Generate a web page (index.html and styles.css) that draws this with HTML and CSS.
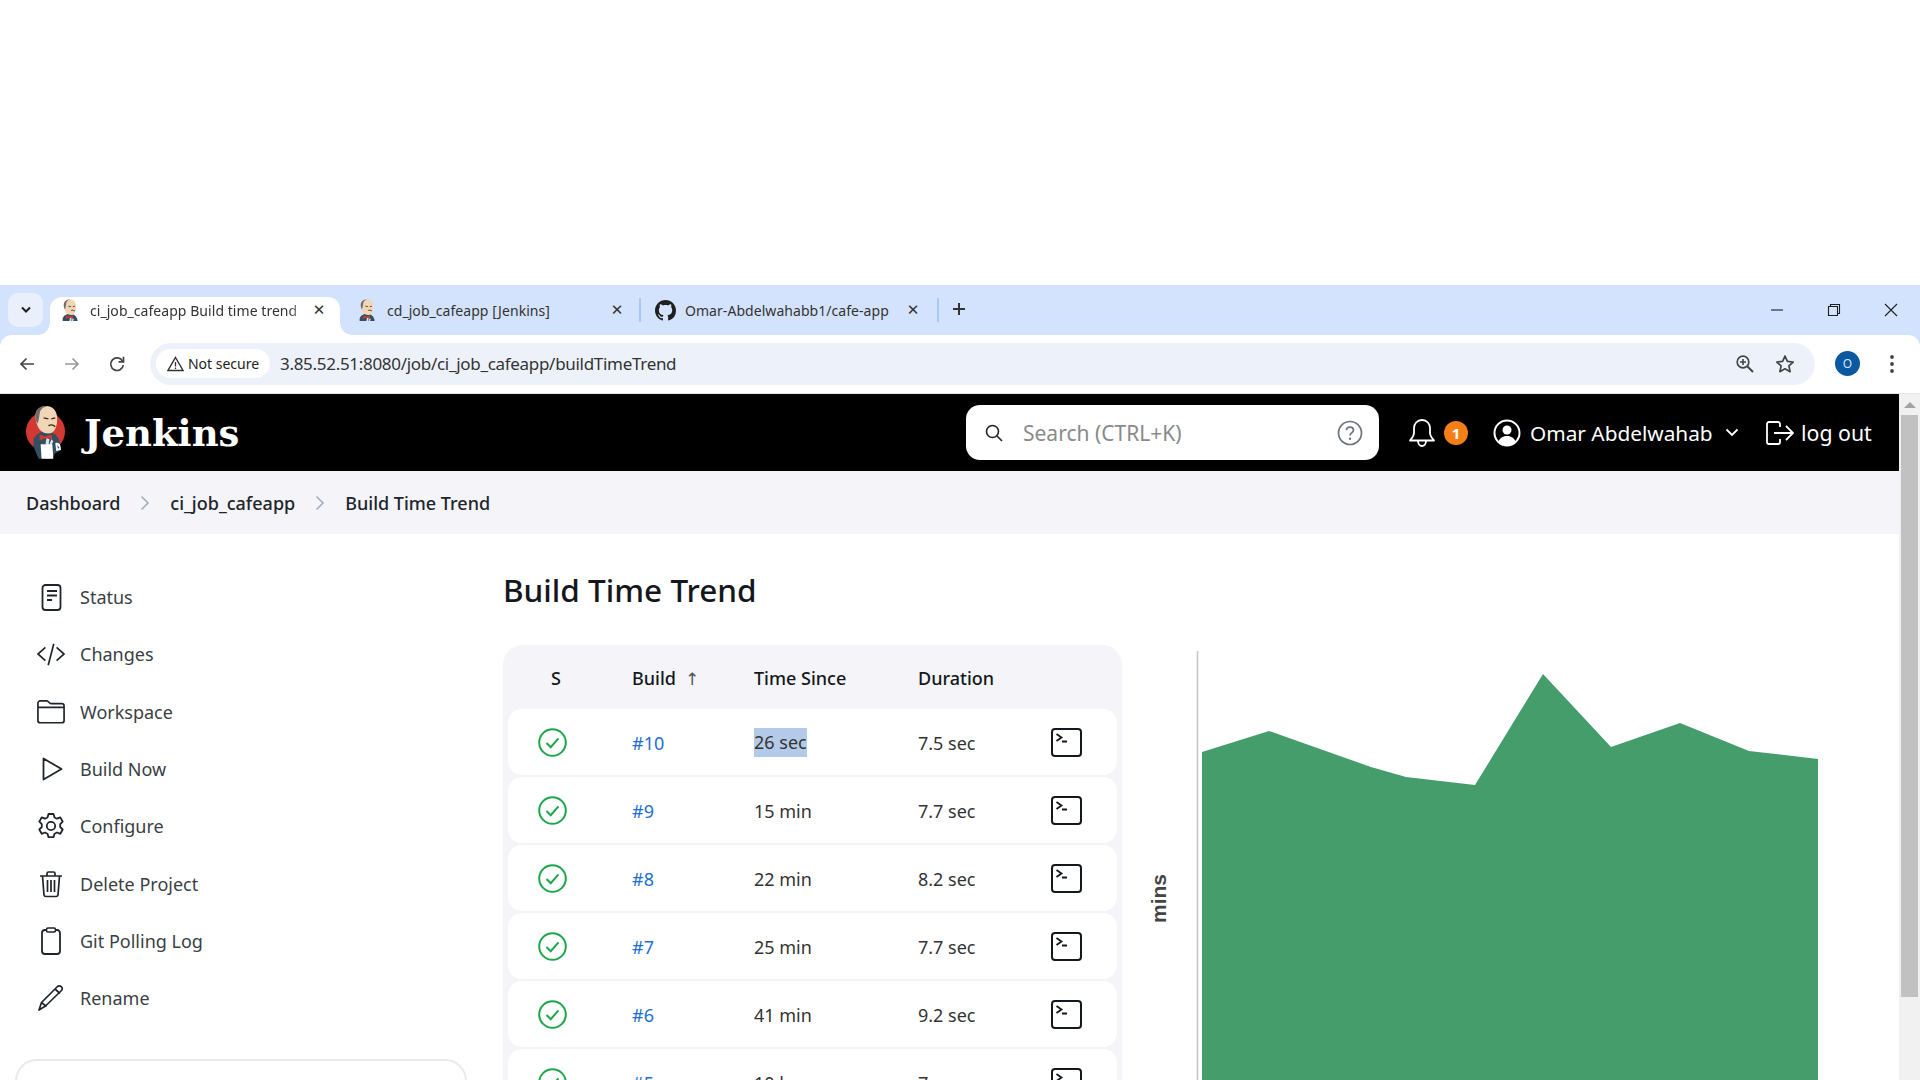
FILE: index.html
```html
<!DOCTYPE html>
<html lang="en">
<head>
<meta charset="utf-8">
<title>ci_job_cafeapp Build time trend</title>
<link rel="stylesheet" href="styles.css">
</head>
<body>
<svg class="defs" width="0" height="0" aria-hidden="true">
  <defs>
    <g id="butler-body">
      <path d="M9 34c3-5 8-7 12-7 7 0 12 3 14 9l2 8c-1 3-4 5-6 5l-3 6H14l-3-7c-2-4-3-9-2-14z" fill="#335061"/>
      <path d="M11 8C12 3 18 0 24 1c6 1 9 6 9 13 0 7-2 12-5 14-4 2-9 1-12-2-3-3-6-10-5-18z" fill="#f0d6b7"/>
      <path d="M11 8c1-5 7-8 12-7-5 1-8 4-8 8l-1 6-1 4c-2-3-3-7-2-11z" fill="#6d6b6d"/>
      <path d="M19 13l5 1M27 14l4-1M24 21c2-1 5-1 7 1" stroke="#3a2a20" stroke-width="1.4" fill="none"/>
      <path d="M15 30l6 2 6-2 1 5-7-1-6 2z" fill="#d33833"/>
      <path d="M22 34l3 1-1 6-3-1zM27 35l2 2-2 4-2-1z" fill="#dfe6ea"/>
    </g>
    <symbol id="butler" viewBox="0 0 42 56">
      <circle cx="21" cy="27" r="20" fill="#d33833"/>
      <use href="#butler-body"/>
      <path d="M16 40h12l1 15H17z" fill="#fff"/>
      <path d="M31 39c2-1 5 0 5 2l1 5-5 1z" fill="#f4f4f4"/>
      <path d="M33 41l2 2-1 2z" fill="#335061"/>
    </symbol>
    <symbol id="butler-fav" viewBox="4 0 36 40">
      <use href="#butler-body"/>
    </symbol>
  </defs>
</svg>
<div class="screen">
  <div class="blank"></div>

  <div class="chrome">
    <div class="tabstrip">
      <div class="tabsearch">
        <svg width="12" height="8" viewBox="0 0 12 8"><path d="M2 1.500l4 4 4-4" fill="none" stroke="#1f1f1f" stroke-width="2"/></svg>
      </div>
      <div class="tab tab-active">
        <svg class="fav"><use href="#butler-fav"/></svg>
        <span class="tab-title tab-title-fade">ci_job_cafeapp Build time trend</span>
        <span class="tab-x">✕</span>
      </div>
      <div class="tab tab-two">
        <svg class="fav"><use href="#butler-fav"/></svg>
        <span class="tab-title">cd_job_cafeapp [Jenkins]</span>
        <span class="tab-x">✕</span>
      </div>
      <i class="tab-sep"></i>
      <div class="tab tab-three">
        <svg class="fav-gh" viewBox="0 0 16 16"><path fill="#1f1f1f" d="M8 0C3.58 0 0 3.58 0 8c0 3.54 2.29 6.53 5.47 7.59.4.07.55-.17.55-.38 0-.19-.01-.82-.01-1.49-2.01.37-2.53-.49-2.69-.94-.09-.23-.48-.94-.82-1.13-.28-.15-.68-.52-.01-.53.63-.01 1.08.58 1.23.82.72 1.21 1.87.87 2.33.66.07-.52.28-.87.51-1.07-1.78-.2-3.64-.89-3.64-3.95 0-.87.31-1.59.82-2.15-.08-.2-.36-1.02.08-2.12 0 0 .67-.21 2.2.82.64-.18 1.32-.27 2-.27.68 0 1.36.09 2 .27 1.53-1.04 2.2-.82 2.2-.82.44 1.1.16 1.92.08 2.12.51.56.82 1.27.82 2.15 0 3.07-1.87 3.75-3.65 3.95.29.25.54.73.54 1.48 0 1.07-.01 1.93-.01 2.2 0 .21.15.46.55.38A8.013 8.013 0 0016 8c0-4.42-3.58-8-8-8z"/></svg>
        <span class="tab-title">Omar-Abdelwahabb1/cafe-app</span>
        <span class="tab-x">✕</span>
      </div>
      <i class="tab-sep"></i>
      <svg class="tab-plus" width="14" height="14" viewBox="0 0 14 14"><path d="M7 1v12M1 7h12" stroke="#333" stroke-width="2"/></svg>
      <div class="winctl">
        <svg width="14" height="14" viewBox="0 0 14 14"><path d="M1 7h12" stroke="#1f1f1f" stroke-width="1.100"/></svg>
        <svg width="14" height="14" viewBox="0 0 14 14"><path d="M1.500 3.500h9v9h-9zM3.500 3.500v-2h9v9h-2" fill="none" stroke="#1f1f1f" stroke-width="1.100"/></svg>
        <svg width="14" height="14" viewBox="0 0 14 14"><path d="M1 1l12 12M13 1L1 13" stroke="#1f1f1f" stroke-width="1.100"/></svg>
      </div>
    </div>

    <div class="toolbar">
      <svg class="nav-ic" viewBox="0 0 18 18"><path d="M16 9H3M8.500 3.500L3 9l5.500 5.500" fill="none" stroke="#444" stroke-width="1.700"/></svg>
      <svg class="nav-ic nav-fwd" viewBox="0 0 18 18"><path d="M2 9h13M9.500 3.500L15 9l-5.500 5.500" fill="none" stroke="#9a9a9a" stroke-width="1.700"/></svg>
      <svg class="nav-ic nav-reload" viewBox="0 0 18 18"><path d="M14.500 6A6.300 6.300 0 1 0 15.300 10" fill="none" stroke="#444" stroke-width="1.700"/><path d="M15.500 1.800V6.800H10.500" fill="none" stroke="#444" stroke-width="1.700"/></svg>
      <div class="omnibox">
        <div class="chip">
          <svg width="17" height="16" viewBox="0 0 17 16"><path d="M8.500 1.500L16 14.500H1z" fill="none" stroke="#333" stroke-width="1.400"/><path d="M8.500 6v4.500M8.500 11.500v1.500" stroke="#333" stroke-width="1.300"/></svg>
          <span>Not secure</span>
        </div>
        <span class="url">3.85.52.51:8080/job/ci_job_cafeapp/buildTimeTrend</span>
        <svg class="omni-zoom" width="20" height="20" viewBox="0 0 20 20"><circle cx="8" cy="8" r="5.800" fill="none" stroke="#444" stroke-width="1.700"/><path d="M12.500 12.500L18 18" stroke="#444" stroke-width="2"/><path d="M8 5v6M5 8h6" stroke="#444" stroke-width="1.600"/></svg>
        <svg class="omni-star" width="20" height="20" viewBox="0 0 20 20"><path d="M10 2l2.400 5.400 5.800.6-4.300 3.900 1.200 5.800L10 14.800 4.900 17.700l1.200-5.800L1.800 8l5.800-.6z" fill="none" stroke="#444" stroke-width="1.700" stroke-linejoin="round"/></svg>
      </div>
      <div class="avatar">O</div>
      <svg class="dots" width="6" height="20" viewBox="0 0 6 20"><circle cx="3" cy="3" r="1.900" fill="#444"/><circle cx="3" cy="10" r="1.900" fill="#444"/><circle cx="3" cy="17" r="1.900" fill="#444"/></svg>
    </div>
  </div>

  <div class="viewport">
    <div class="page">
      <header class="jk-bar">
        <svg class="jk-logo"><use href="#butler"/></svg>
        <span class="jk-name">Jenkins</span>
        <div class="search">
          <svg width="20" height="20" viewBox="0 0 20 20"><circle cx="8.500" cy="8.500" r="6" fill="none" stroke="#222" stroke-width="1.600"/><path d="M13 13l5 5" stroke="#222" stroke-width="1.600"/></svg>
          <span class="search-text">Search (CTRL+K)</span>
          <svg class="search-help" width="26" height="26" viewBox="0 0 26 26"><circle cx="13" cy="13" r="11.500" fill="none" stroke="#6b7280" stroke-width="1.700"/><path d="M9.500 10.300c0-2 1.600-3.200 3.500-3.200s3.500 1.200 3.500 3c0 2.800-3.500 2.700-3.500 5.400" fill="none" stroke="#6b7280" stroke-width="1.700"/><circle cx="13" cy="18.700" r="1.200" fill="#6b7280"/></svg>
        </div>
        <svg class="bell" width="26" height="30" viewBox="0 0 26 30"><path d="M13 2c-5 0-8 4-8 8v5c0 3-2 5-4 7.500h24c-2-2.500-4-4.500-4-7.500v-5c0-4-3-8-8-8zM9 23c0 3 2 5 4 5s4-2 4-5" fill="none" stroke="#fff" stroke-width="1.800" stroke-linejoin="round"/></svg>
        <span class="badge">1</span>
        <svg class="user" width="28" height="28" viewBox="0 0 28 28"><circle cx="14" cy="14" r="12.500" fill="none" stroke="#fff" stroke-width="2"/><circle cx="14" cy="11" r="4.500" fill="#fff"/><path d="M5.500 22.500c1.500-4 5-5.500 8.500-5.500s7 1.500 8.500 5.500c-2 2.500-5 4-8.500 4s-6.500-1.500-8.500-4z" fill="#fff"/></svg>
        <span class="user-name">Omar Abdelwahab</span>
        <svg class="chev" width="14" height="9" viewBox="0 0 14 9"><path d="M1.500 1.500L7 7l5.500-5.500" fill="none" stroke="#fff" stroke-width="1.800"/></svg>
        <svg class="logout" width="28" height="24" viewBox="0 0 28 24"><path d="M14 6V3a2 2 0 0 0-2-2H3a2 2 0 0 0-2 2v18a2 2 0 0 0 2 2h9a2 2 0 0 0 2-2v-3M8 12h19M20 5l7 7-7 7" fill="none" stroke="#fff" stroke-width="1.800"/></svg>
        <span class="logout-text">log out</span>
      </header>

      <nav class="crumbs">
        <span>Dashboard</span>
        <svg width="10" height="16" viewBox="0 0 10 16"><path d="M1.500 1.500L8 8l-6.500 6.500" fill="none" stroke="#9fb0c4" stroke-width="1.600"/></svg>
        <span>ci_job_cafeapp</span>
        <svg width="10" height="16" viewBox="0 0 10 16"><path d="M1.500 1.500L8 8l-6.500 6.500" fill="none" stroke="#9fb0c4" stroke-width="1.600"/></svg>
        <span>Build Time Trend</span>
      </nav>

      <div class="content">
        <aside class="side">
          <div class="side-item">
            <svg viewBox="0 0 28 28"><rect x="5.500" y="2" width="18" height="25" rx="3" fill="none" stroke="#20252b" stroke-width="1.800"/><path d="M10 8h10M10 12.500h10M10 17h5" stroke="#20252b" stroke-width="1.800"/></svg>
            <span>Status</span>
          </div>
          <div class="side-item">
            <svg viewBox="0 0 30 28"><path d="M9 7l-8 7 8 7M21 7l8 7-8 7M18 3l-6 23" fill="none" stroke="#20252b" stroke-width="1.800"/></svg>
            <span>Changes</span>
          </div>
          <div class="side-item">
            <svg viewBox="0 0 30 28"><path d="M1 24V5.500A2.500 2.500 0 0 1 3.500 3h7c2 0 2.500 3 4.500 3h11.500A2.500 2.500 0 0 1 29 8.500V24a2.500 2.500 0 0 1-2.500 2.500h-23A2.500 2.500 0 0 1 1 24zM1 10h28" fill="none" stroke="#20252b" stroke-width="1.800" transform="translate(0 -1)"/></svg>
            <span>Workspace</span>
          </div>
          <div class="side-item">
            <svg viewBox="0 0 28 28"><path d="M6.500 3.500v21l18-10.500z" fill="none" stroke="#20252b" stroke-width="1.800" stroke-linejoin="round"/></svg>
            <span>Build Now</span>
          </div>
          <div class="side-item">
            <svg viewBox="0 0 28 28"><path d="M11.500 2h5l1 3.500 2.500 1.200 3.300-1.300 2.400 4.300-2.500 2.500v2.800l2.500 2.500-2.400 4.300-3.300-1.300-2.500 1.200-1 3.500h-5l-1-3.500-2.500-1.200-3.300 1.300-2.400-4.300 2.500-2.500v-2.800L2.300 9.700l2.400-4.300L8 6.700l2.500-1.200z" fill="none" stroke="#20252b" stroke-width="1.800" stroke-linejoin="round"/><circle cx="14" cy="14" r="4.200" fill="none" stroke="#20252b" stroke-width="1.800"/></svg>
            <span>Configure</span>
          </div>
          <div class="side-item">
            <svg viewBox="0 0 28 28"><path d="M3 6h22M10 6V3.500A1.500 1.500 0 0 1 11.500 2h5A1.500 1.500 0 0 1 18 3.500V6M5.500 6l1.500 19a2 2 0 0 0 2 1.500h10a2 2 0 0 0 2-1.500l1.500-19M10.500 10v12M14 10v12M17.500 10v12" fill="none" stroke="#20252b" stroke-width="1.700"/></svg>
            <span>Delete Project</span>
          </div>
          <div class="side-item">
            <svg viewBox="0 0 28 28"><path d="M9.500 3.500H8A3 3 0 0 0 5 6.500v18a3 3 0 0 0 3 3h12a3 3 0 0 0 3-3v-18a3 3 0 0 0-3-3h-1.500" fill="none" stroke="#20252b" stroke-width="1.800" transform="translate(0 -.5)"/><rect x="9.500" y="1" width="9" height="4" rx="1.500" fill="none" stroke="#20252b" stroke-width="1.600"/></svg>
            <span>Git Polling Log</span>
          </div>
          <div class="side-item">
            <svg viewBox="0 0 28 28"><path d="M2 26l2.500-7.500L20 3c1.500-1.500 3-1.500 4.300-.3s1.300 2.800-.3 4.300L8.500 22zM4.500 18.500l5 4M18 5l5 4.500" fill="none" stroke="#20252b" stroke-width="1.700" stroke-linejoin="round"/></svg>
            <span>Rename</span>
          </div>
          <div class="side-box"></div>
        </aside>

        <main class="main">
          <h1>Build Time Trend</h1>
          <div class="trend">
            <section class="card">
              <div class="row row-head">
                <span class="col-s">S</span>
                <span>Build<b class="sort">↑</b></span>
                <span>Time Since</span>
                <span>Duration</span>
                <span></span>
              </div>
              <div class="row">
                <svg class="ok" viewBox="0 0 29 29"><circle cx="14.500" cy="14.500" r="13.300" fill="none" stroke="#1ea64b" stroke-width="2"/><path d="M8.500 15l4.200 4.200 7.800-8.800" fill="none" stroke="#1ea64b" stroke-width="2"/></svg>
                <a>#10</a>
                <span><span class="sel">26 sec</span></span>
                <span>7.5 sec</span>
                <svg class="term" viewBox="0 0 31 29"><rect x="1" y="1" width="29" height="27" rx="3" fill="none" stroke="#14181d" stroke-width="2"/><path d="M5.500 6l5 3.500-5 3.500M11 13.500h5" fill="none" stroke="#14181d" stroke-width="1.800"/></svg>
              </div>
              <div class="row">
                <svg class="ok" viewBox="0 0 29 29"><circle cx="14.500" cy="14.500" r="13.300" fill="none" stroke="#1ea64b" stroke-width="2"/><path d="M8.500 15l4.200 4.200 7.800-8.800" fill="none" stroke="#1ea64b" stroke-width="2"/></svg>
                <a>#9</a>
                <span>15 min</span>
                <span>7.7 sec</span>
                <svg class="term" viewBox="0 0 31 29"><rect x="1" y="1" width="29" height="27" rx="3" fill="none" stroke="#14181d" stroke-width="2"/><path d="M5.500 6l5 3.500-5 3.500M11 13.500h5" fill="none" stroke="#14181d" stroke-width="1.800"/></svg>
              </div>
              <div class="row">
                <svg class="ok" viewBox="0 0 29 29"><circle cx="14.500" cy="14.500" r="13.300" fill="none" stroke="#1ea64b" stroke-width="2"/><path d="M8.500 15l4.200 4.200 7.800-8.800" fill="none" stroke="#1ea64b" stroke-width="2"/></svg>
                <a>#8</a>
                <span>22 min</span>
                <span>8.2 sec</span>
                <svg class="term" viewBox="0 0 31 29"><rect x="1" y="1" width="29" height="27" rx="3" fill="none" stroke="#14181d" stroke-width="2"/><path d="M5.500 6l5 3.500-5 3.500M11 13.500h5" fill="none" stroke="#14181d" stroke-width="1.800"/></svg>
              </div>
              <div class="row">
                <svg class="ok" viewBox="0 0 29 29"><circle cx="14.500" cy="14.500" r="13.300" fill="none" stroke="#1ea64b" stroke-width="2"/><path d="M8.500 15l4.200 4.200 7.800-8.800" fill="none" stroke="#1ea64b" stroke-width="2"/></svg>
                <a>#7</a>
                <span>25 min</span>
                <span>7.7 sec</span>
                <svg class="term" viewBox="0 0 31 29"><rect x="1" y="1" width="29" height="27" rx="3" fill="none" stroke="#14181d" stroke-width="2"/><path d="M5.500 6l5 3.500-5 3.500M11 13.500h5" fill="none" stroke="#14181d" stroke-width="1.800"/></svg>
              </div>
              <div class="row">
                <svg class="ok" viewBox="0 0 29 29"><circle cx="14.500" cy="14.500" r="13.300" fill="none" stroke="#1ea64b" stroke-width="2"/><path d="M8.500 15l4.200 4.200 7.800-8.800" fill="none" stroke="#1ea64b" stroke-width="2"/></svg>
                <a>#6</a>
                <span>41 min</span>
                <span>9.2 sec</span>
                <svg class="term" viewBox="0 0 31 29"><rect x="1" y="1" width="29" height="27" rx="3" fill="none" stroke="#14181d" stroke-width="2"/><path d="M5.500 6l5 3.500-5 3.500M11 13.500h5" fill="none" stroke="#14181d" stroke-width="1.800"/></svg>
              </div>
              <div class="row">
                <svg class="ok" viewBox="0 0 29 29"><circle cx="14.500" cy="14.500" r="13.300" fill="none" stroke="#1ea64b" stroke-width="2"/><path d="M8.500 15l4.200 4.200 7.800-8.800" fill="none" stroke="#1ea64b" stroke-width="2"/></svg>
                <a>#5</a>
                <span>10 hr</span>
                <span>7 sec</span>
                <svg class="term" viewBox="0 0 31 29"><rect x="1" y="1" width="29" height="27" rx="3" fill="none" stroke="#14181d" stroke-width="2"/><path d="M5.500 6l5 3.500-5 3.500M11 13.500h5" fill="none" stroke="#14181d" stroke-width="1.800"/></svg>
              </div>
            </section>
            <svg class="chart" width="680" height="440" viewBox="0 0 680 440">
              <path d="M57.500 6V440" stroke="#c4c4c4" stroke-width="1.500"/>
              <path d="M62 107L129 86L197 110L231 122L266 132L335 140L403 29L471 102L540 78L609 106L678 114V440H62Z" fill="#459d6c"/>
              <text class="chart-label" transform="translate(26 278) rotate(-90)">mins</text>
            </svg>
          </div>
        </main>
      </div>
    </div>
    <div class="scrollbar">
      <svg width="14" height="8" viewBox="0 0 14 8"><path d="M7 1l6 6H1z" fill="#a3a3a3"/></svg>
      <div class="thumb"></div>
    </div>
  </div>
</div>
</body>
</html>
```

FILE: styles.css
```css
* { box-sizing: border-box; }
html, body { margin: 0; height: 100%; background: #fff; overflow: hidden; }
body { font-family: "Noto Sans", "Open Sans", sans-serif; color: #14181d; }
.defs { position: absolute; }
.screen { width: 1920px; height: 1080px; display: flex; flex-direction: column; overflow: hidden; }
.blank { height: 285px; flex: none; background: #fff; }
.chrome { flex: none; background: #d3e3fd; }

/* tab strip */
.tabstrip { height: 50px; display: flex; align-items: flex-start; padding: 8px 0 0 8px; font-size: 14px; color: #333; }
.tabsearch { width: 35px; height: 34px; border-radius: 10px; background: #e9f0fc; display: flex; align-items: center; justify-content: center; }
.tab { height: 38px; display: flex; align-items: center; margin-top: 4px; position: relative; }
.tab-active { width: 290px; margin-left: 7px; background: #fff; border-radius: 12px 12px 0 0; padding: 0 13px 12px 10px; }
.tab-active::before, .tab-active::after { content: ""; position: absolute; bottom: 0; width: 12px; height: 12px; background: radial-gradient(circle at 0 0, transparent 11.5px, #fff 12px); }
.tab-active::before { left: -12px; }
.tab-active::after { right: -12px; background: radial-gradient(circle at 100% 0, transparent 11.5px, #fff 12px); }
.tab-two { width: 299px; padding: 0 14px 12px 17px; }
.tab-three { width: 296px; padding: 0 16px 12px 14px; }
.fav { width: 20px; height: 22px; flex: none; }
.fav-gh { width: 21px; height: 21px; flex: none; }
.tab-title { flex: 1; margin-left: 10px; white-space: nowrap; overflow: hidden; letter-spacing: .05px; }
.tab-three .tab-title { margin-left: 9px; }
.tab-title-fade { -webkit-mask-image: linear-gradient(90deg, #000 90%, transparent); mask-image: linear-gradient(90deg, #000 90%, transparent); }
.tab-x { font-size: 15px; font-weight: 700; width: 16px; text-align: center; color: #333; font-family: "DejaVu Sans", sans-serif; }
.tab-sep { width: 2px; height: 24px; background: #a8c7fa; margin-top: 5px; flex: none; }
.tab-plus { margin: 9px 0 0 13px; flex: none; }
.winctl { margin-left: auto; display: flex; align-items: center; gap: 43px; padding: 10px 22px 0 0; }
.winctl svg { display: block; }

/* toolbar */
.toolbar { height: 59px; background: #fff; display: flex; align-items: center; padding: 0 0 1px 18px; border-bottom: 1px solid #e6e6e6; border-radius: 12px 12px 0 0; }
.nav-ic { width: 18px; height: 18px; flex: none; }
.nav-fwd { margin-left: 27px; }
.nav-reload { margin-left: 27px; }
.omnibox { width: 1665px; height: 42px; margin-left: 24px; border-radius: 21px; background: #edf2fa; display: flex; align-items: center; padding: 0 20px 0 6px; }
.chip { height: 29px; width: 114px; border-radius: 15px; background: #fff; display: flex; align-items: center; justify-content: center; gap: 4px; font-size: 14px; color: #222; }
.url { margin-left: 10px; font-size: 17px; color: #333; letter-spacing: -.3px; flex: 1; }
.omni-star { margin-left: 20px; }
.avatar { width: 25px; height: 25px; border-radius: 50%; background: #0b57a0; color: #d3e3fd; font-size: 12px; display: flex; align-items: center; justify-content: center; margin-left: 20px; flex: none; }
.dots { margin-left: 29px; flex: none; }

/* page */
.viewport { flex: 1; display: flex; min-height: 0; }
.page { width: 1899px; flex: none; display: flex; flex-direction: column; min-height: 0; }
.scrollbar { flex: 1; background: #f1f1f1; display: flex; flex-direction: column; align-items: center; padding-top: 7px; }
.thumb { width: 17px; height: 582px; margin-top: 6px; background: #c1c1c1; }

.jk-bar { height: 77px; flex: none; background: #000; display: flex; align-items: center; color: #fff; padding-left: 25px; }
.jk-logo { width: 41px; height: 55px; flex: none; }
.jk-name { font-family: "DejaVu Serif", "Liberation Serif", serif; font-weight: 700; font-size: 37px; margin-left: 16px; width: 160px; white-space: nowrap; padding-left: 2px; }
.search { width: 413px; height: 55px; margin-left: 724px; border-radius: 14px; background: #fff; display: flex; align-items: center; padding: 0 16px 0 18px; flex: none; }
.search-text { margin-left: 19px; font-size: 21px; color: #8a8a8a; flex: 1; }
.bell { margin-left: 30px; flex: none; }
.badge { width: 24px; height: 24px; border-radius: 50%; background: #f57f17; color: #fff; font-size: 15px; font-weight: 700; display: flex; align-items: center; justify-content: center; margin-left: 9px; flex: none; }
.user { margin-left: 25px; flex: none; }
.user-name { font-size: 20.8px; margin-left: 9px; white-space: nowrap; width: 181px; }
.chev { margin-left: 14px; flex: none; }
.logout { margin-left: 27px; flex: none; }
.logout-text { font-size: 21.3px; margin-left: 7px; white-space: nowrap; }

.crumbs { height: 63px; flex: none; background: #f4f4f9; display: flex; align-items: center; padding-left: 26px; font-size: 18px; font-weight: 500; color: #20252b; }
.crumbs svg { margin: 0 20px; flex: none; }

.content { flex: 1; display: flex; min-height: 0; }
.side { width: 503px; flex: none; padding: 34.5px 0 0 15px; }
.side-item { height: 57.3px; display: flex; align-items: center; font-size: 18px; color: #3a3f45; }
.side-item svg { width: 28px; height: 28px; flex: none; margin-left: 22px; }
.side-item span { margin-left: 15px; }
.side-box { width: 452px; height: 120px; margin-top: 32px; border: 2px solid #e9e9f0; border-radius: 22px; }
.main { flex: 1; padding-top: 34px; min-width: 0; }
h1 { margin: 0 0 33px; font-size: 31.5px; line-height: 44px; font-weight: 500; color: #14181d; }
.trend { display: flex; align-items: flex-start; }
.card { width: 619px; flex: none; background: #f4f4f9; border-radius: 20px 20px 0 0; padding: 0 5px; }
.row { height: 66px; margin-bottom: 2px; border-radius: 14px; background: #fff; display: grid; grid-template-columns: 124px 122px 164px 133px 31px; align-items: center; font-size: 18px; color: #333; }
.row > a, .row > span { padding-top: 1px; }
.row-head { height: 64px; margin: 0; background: none; font-weight: 500; color: #14181d; }
.row-head > span { padding-top: 2px; }
.col-s { padding-left: 43px; }
.sort { font-family: "DejaVu Sans", sans-serif; font-weight: 400; margin-left: 9px; color: #555; font-size: 17px; }
.ok { width: 29px; height: 29px; margin-left: 30px; }
.row a { color: #1d6fd1; }
.sel { background: #b3cbe8; display: inline-block; line-height: 29px; }
.term { width: 31px; height: 29px; }
.chart { margin-left: 18px; flex: none; }
.chart-label { font-family: "Liberation Sans", sans-serif; font-weight: 700; font-size: 21px; fill: #444; }
```
